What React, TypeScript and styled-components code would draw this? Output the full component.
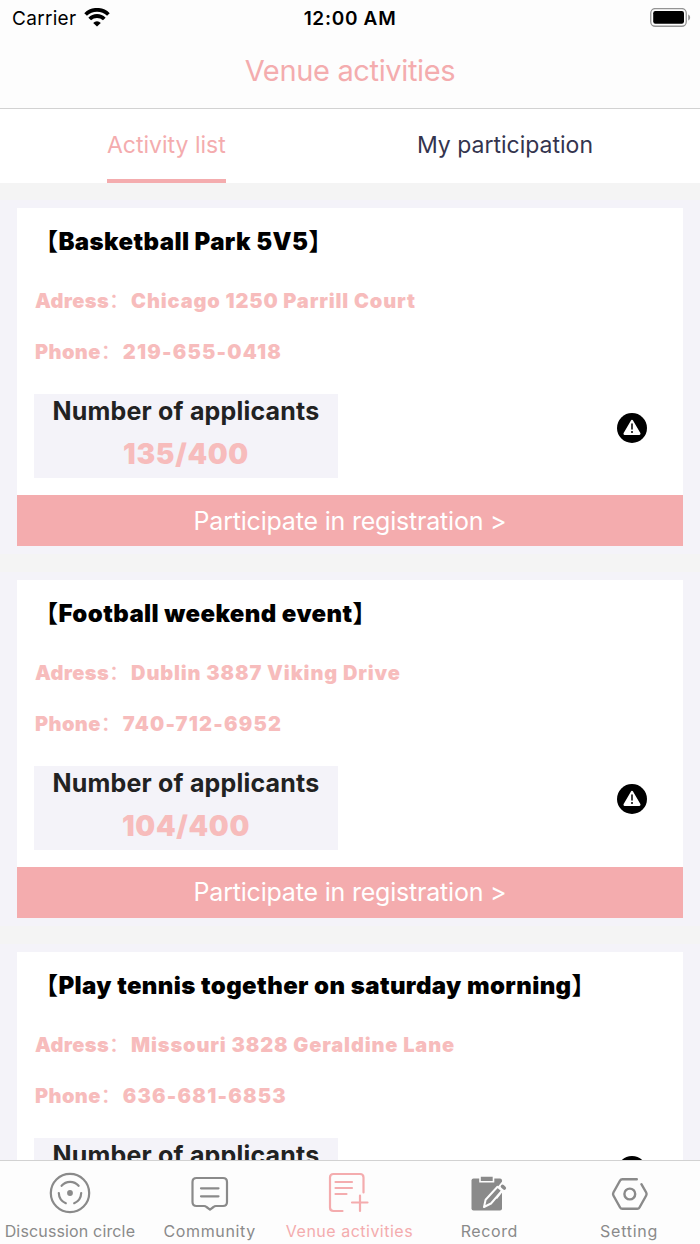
import styled, {createGlobalStyle} from "styled-components";
import type {ReactNode} from "react";

const theme = {
    colors: {
        accent: '#f4acae',
        accentSoft: '#f7bcbc',
        panel: '#f4f3f9',
        page: '#f4f4f4',
        line: '#d2d2d2',
        muted: '#8a8a8a',
        tab: '#34344e',
    },
}

const activities = [
    {title: 'Basketball Park 5V5', address: 'Chicago 1250 Parrill Court', phone: '219-655-0418', count: '135/400'},
    {title: 'Football weekend event', address: 'Dublin 3887 Viking Drive', phone: '740-712-6952', count: '104/400'},
    {title: 'Play tennis together on saturday morning', address: 'Missouri 3828 Geraldine Lane', phone: '636-681-6853', count: '98/400'},
]

const WifiIcon = () => (
    <svg width="26" height="20" viewBox="0 0 26 20" fill="none" stroke="#000" strokeWidth="3.8">
        <path d="M1.6 6.500A16.2 16.2 0 0 1 24.4 6.500"/>
        <path d="M5.7 11A10.4 10.4 0 0 1 20.3 11"/>
        <path d="M13 18.600L9.2 14.900A5.4 5.4 0 0 1 16.8 14.900Z" fill="#000" stroke="none"/>
    </svg>
)

const BatteryIcon = () => (
    <svg width="42" height="20" viewBox="0 0 42 20">
        <rect x="1.75" y="0.55" width="35.5" height="17.7" rx="4.5" fill="none" stroke="#949494" strokeWidth="1.3"/>
        <rect x="4.2" y="3" width="30.8" height="12.8" rx="2.2" fill="#000"/>
        <path d="M39.2 6.5C41.8 7.6 41.8 11.4 39.2 12.5Z" fill="#949494"/>
    </svg>
)

const WarningIcon = () => (
    <svg width="30" height="30" viewBox="0 0 30 30">
        <circle cx="15" cy="15" r="15" fill="#000"/>
        <path d="M15 8L22.3 20.7H7.7Z" fill="#fff" stroke="#fff" strokeWidth="2.4" strokeLinejoin="round"/>
        <path d="M15 11V16" stroke="#000" strokeWidth="1.5" strokeLinecap="round"/>
        <circle cx="15" cy="19" r="1" fill="#000"/>
    </svg>
)

const CircleIcon = () => (
    <svg width="42" height="42" viewBox="0 0 42 42" fill="none" stroke="currentColor" strokeWidth="2.2" strokeLinecap="round">
        <circle cx="21" cy="21" r="19.2"/>
        <circle cx="21" cy="21" r="2.9" fill="currentColor" stroke="none"/>
        <path d="M12.6 13.8A11.2 11.2 0 0 1 29.6 13.8"/>
        <path d="M9.8 21A11.5 11.5 0 0 0 16.8 31.2"/>
        <path d="M32.2 21A11.5 11.5 0 0 1 25.2 31.2"/>
    </svg>
)

const CommunityIcon = () => (
    <svg width="42" height="42" viewBox="0 0 42 42" fill="none" stroke="currentColor" strokeWidth="2.2" strokeLinecap="round" strokeLinejoin="round">
        <path d="M7.500 6H34Q38 6 38 10V30Q38 34 34 34H27Q25.5 34 24.500 35L21 37.6L17.500 35Q16.500 34 15 34H7.500Q3.500 34 3.500 30V10Q3.500 6 7.500 6Z"/>
        <path d="M12 16.3H29.500M12 24.3H29.500"/>
    </svg>
)

const VenueIcon = () => (
    <svg width="42" height="42" viewBox="0 0 42 42" fill="none" stroke="currentColor" strokeWidth="2.2" strokeLinecap="round">
        <path d="M35.5 20.5V5.5Q35.5 2 32 2H5.5Q2 2 2 5.5V35.5Q2 39 5.5 39H14.5"/>
        <path d="M7.5 10H24M7.5 16H24M7.5 22H18.5"/>
        <path d="M32 23.5V39M24 30.5H39.5"/>
    </svg>
)

const RecordIcon = () => (
    <svg width="42" height="42" viewBox="0 0 42 42">
        <path d="M5.500 6.4H32Q34 6.4 34 8.4V36.500Q34 38.500 32 38.500H5.500Q3.500 38.500 3.500 36.500V8.4Q3.500 6.4 5.500 6.4Z" fill="currentColor"/>
        <path d="M12 4H25.500V9.8H12Z" fill="currentColor" stroke="#fdfdfd" strokeWidth="1.6"/>
        <path d="M34.500 9V20L29 27L24 22Z" fill="#fdfdfd"/>
        <path d="M29.500 14.8L34 18.6L23 31.5L16 35L17.6 27.8Z" fill="currentColor" stroke="#fdfdfd" strokeWidth="2" strokeLinejoin="round"/>
        <path d="M25 14L29 10" stroke="currentColor" strokeWidth="2"/>
        <path d="M34.5 14.4L36.3 16" stroke="currentColor" strokeWidth="3.6" strokeLinecap="round"/>
    </svg>
)

const SettingIcon = () => (
    <svg width="42" height="42" viewBox="0 0 42 42" fill="none" stroke="currentColor" strokeWidth="2.4" strokeLinecap="round" strokeLinejoin="round">
        <path d="M28.8 7.2H14.3Q12.8 7.2 12.1 8.5L5.4 20.5Q4.6 22 5.4 23.5L12.1 35.5Q12.8 36.8 14.3 36.8H29.3Q30.8 36.8 31.5 35.5L38.2 23.5Q39 22 38.2 20.5L33.4 12.2"/>
        <circle cx="21.8" cy="22" r="5.4"/>
    </svg>
)

const tabs: {label: string; icon: ReactNode; tracking: string}[] = [
    {label: 'Discussion circle', icon: <CircleIcon/>, tracking: '0.15px'},
    {label: 'Community', icon: <CommunityIcon/>, tracking: '0.65px'},
    {label: 'Venue activities', icon: <VenueIcon/>, tracking: '0.5px'},
    {label: 'Record', icon: <RecordIcon/>, tracking: '0.6px'},
    {label: 'Setting', icon: <SettingIcon/>, tracking: '0.75px'},
]

const App = () => {
    return (
        <Screen>
            <GlobalStyle/>
            <StatusBar>
                <Carrier>Carrier <WifiIcon/></Carrier>
                <Clock>12:00 AM</Clock>
                <Battery><BatteryIcon/></Battery>
            </StatusBar>
            <NavTitle>Venue activities</NavTitle>
            <Segments>
                <Segment $active>Activity list</Segment>
                <Segment>My participation</Segment>
            </Segments>
            <List>
                {activities.map((item) => (
                    <Cell key={item.title}>
                        <Card>
                            <CardTitle>【{item.title}】</CardTitle>
                            <Detail>Adress<Colon>：</Colon><Value>{item.address}</Value></Detail>
                            <Detail>Phone<Colon>：</Colon><Value $digits>{item.phone}</Value></Detail>
                            <CardRow>
                                <Applicants>
                                    <ApplicantsLabel>Number of applicants</ApplicantsLabel>
                                    <ApplicantsCount>{item.count}</ApplicantsCount>
                                </Applicants>
                                <WarningIcon/>
                            </CardRow>
                            <JoinButton>Participate in registration &gt;</JoinButton>
                        </Card>
                    </Cell>
                ))}
            </List>
            <TabBar>
                {tabs.map((tab) => (
                    <TabItem key={tab.label} $active={tab.label === 'Venue activities'}>
                        {tab.icon}
                        <TabLabel $tracking={tab.tracking}>{tab.label}</TabLabel>
                    </TabItem>
                ))}
            </TabBar>
        </Screen>
    );
};

export default App;

const GlobalStyle = createGlobalStyle`
    * {
        box-sizing: border-box;
    }

    body {
        margin: 0;
        font-family: Inter, 'Noto Sans CJK SC', sans-serif;
    }

    h1, h2, p {
        margin: 0;
    }

    svg {
        display: block;
        flex-shrink: 0;
    }
`

const Screen = styled.div`
    display: flex;
    flex-direction: column;
    height: 1244px;
    overflow: hidden;
    background: ${theme.colors.page};
`

const StatusBar = styled.div`
    display: grid;
    grid-template-columns: 1fr auto 1fr;
    align-items: center;
    height: 36px;
    padding: 0 9px 0 12px;
    background: #fdfdfd;
`

const Carrier = styled.span`
    display: flex;
    align-items: center;
    gap: 8px;
    font-size: 19px;
    letter-spacing: 0.3px;
`

const Clock = styled.span`
    margin-right: 3px;
    font-size: 19px;
    font-weight: 600;
    letter-spacing: 0.7px;
`

const Battery = styled.span`
    justify-self: end;
`

const NavTitle = styled.h1`
    height: 73px;
    border-bottom: 1px solid ${theme.colors.line};
    background: #fdfdfd;
    color: ${theme.colors.accent};
    font-size: 29px;
    font-weight: 400;
    line-height: 70px;
    letter-spacing: -0.35px;
    text-align: center;
`

const Segments = styled.div`
    display: flex;
    justify-content: space-between;
    height: 74px;
    padding: 0 107px;
    background: #fff;
`

const Segment = styled.button<{ $active?: boolean }>`
    padding: 1px 0 0;
    border: 0;
    border-bottom: 4px solid ${({$active}) => $active ? theme.colors.accent : 'transparent'};
    background: none;
    color: ${({$active}) => $active ? theme.colors.accent : theme.colors.tab};
    font-family: inherit;
    font-size: 23px;
    font-weight: 400;
`

const List = styled.main`
    flex: 1;
    min-height: 0;
    padding-top: 17px;
    overflow: hidden;
`

const Cell = styled.section`
    padding: 8px 17px;
    margin-bottom: 17.75px;
    background: ${theme.colors.panel};
`

const Card = styled.article`
    display: flex;
    flex-direction: column;
    height: 338px;
    background: #fff;
`

const CardTitle = styled.h2`
    padding: 17px 17px 0;
    height: 68px;
    font-size: 24px;
    font-weight: 900;
    line-height: 34px;
    letter-spacing: 0.4px;
    white-space: nowrap;
`

const Detail = styled.p`
    display: flex;
    height: 51px;
    padding-left: 18px;
    color: ${theme.colors.accentSoft};
    font-size: 20px;
    font-weight: 900;
    line-height: 50px;
    letter-spacing: 0.4px;
`

const Colon = styled.span`
    width: 22px;
    font-weight: 500;
`

const Value = styled.span<{ $digits?: boolean }>`
    letter-spacing: ${({$digits}) => $digits ? '1.25px' : '0.87px'};
`

const CardRow = styled.div`
    display: flex;
    justify-content: space-between;
    padding: 16px 36px 0 17px;

    > svg {
        margin-top: 18.6px;
    }
`

const Applicants = styled.div`
    width: 304px;
    height: 84px;
    background: ${theme.colors.panel};
    text-align: center;
`

const ApplicantsLabel = styled.p`
    color: #222;
    font-size: 25px;
    font-weight: 650;
    line-height: 35px;
    letter-spacing: 0.2px;
`

const ApplicantsCount = styled.p`
    color: ${theme.colors.accentSoft};
    font-size: 28px;
    font-weight: 900;
    line-height: 50px;
    letter-spacing: 0.7px;
`

const JoinButton = styled.button`
    height: 51px;
    margin-top: auto;
    border: 0;
    background: ${theme.colors.accent};
    color: #fff;
    font-family: inherit;
    font-size: 25px;
    font-weight: 400;
    letter-spacing: -0.2px;
`

const TabBar = styled.nav`
    display: grid;
    grid-template-columns: repeat(5, 1fr);
    height: 84px;
    padding-right: 1px;
    border-top: 1px solid ${theme.colors.line};
    background: #fdfdfd;
`

const TabItem = styled.div<{ $active: boolean }>`
    display: flex;
    flex-direction: column;
    align-items: center;
    min-width: 0;
    padding-top: 11px;
    color: ${({$active}) => $active ? theme.colors.accent : theme.colors.muted};
`

const TabLabel = styled.span<{ $tracking: string }>`
    margin-top: 7px;
    font-size: 16px;
    line-height: 20px;
    letter-spacing: ${({$tracking}) => $tracking};
    white-space: nowrap;
`
